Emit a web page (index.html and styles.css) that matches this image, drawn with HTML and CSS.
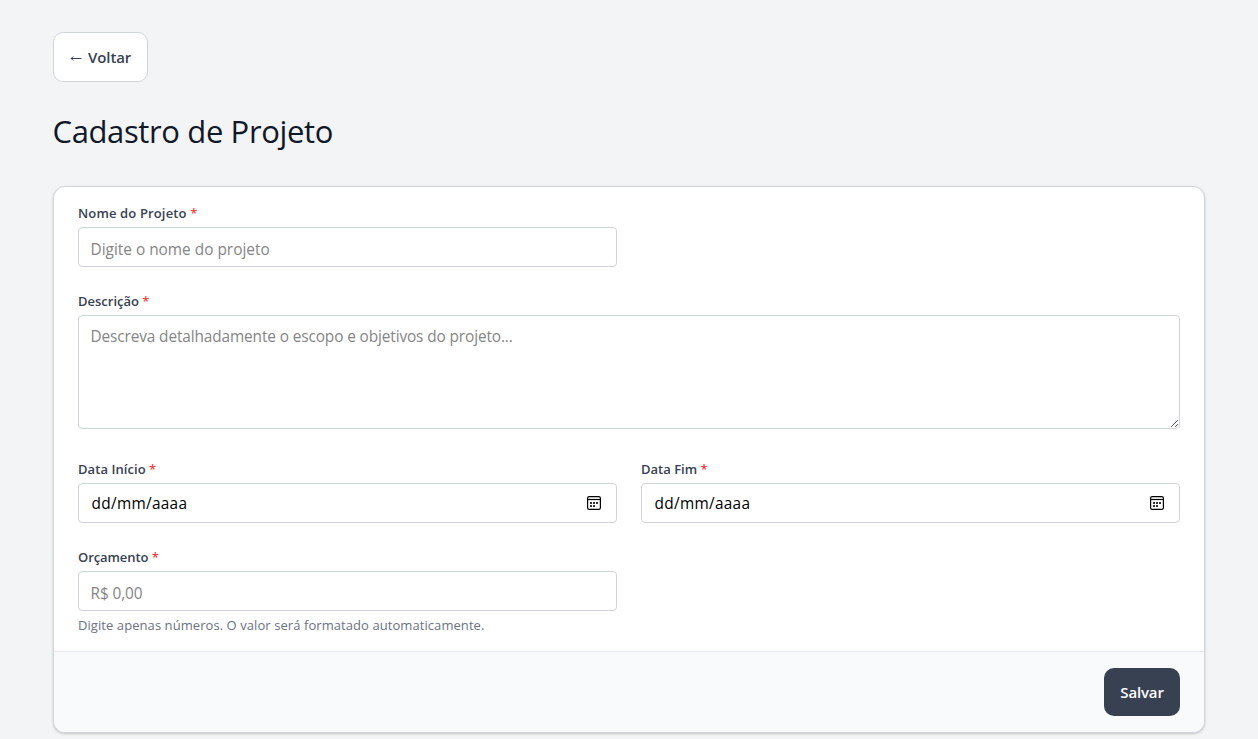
FILE: index.html
```html
<!DOCTYPE html>
<html lang="pt-BR">
<head>
<meta charset="utf-8">
<title>Cadastro de Projeto</title>
<link rel="stylesheet" href="styles.css">
</head>
<body>
<main class="page">
  <button class="btn-back" type="button"><svg class="arrow" viewBox="0 0 12 8"><path d="M11.5 4.5H1M3.2 2.5l-2 2 2 2"/></svg><span>Voltar</span></button>
  <h1 class="title">Cadastro de Projeto</h1>
  <form class="card">
    <div class="fields">
      <div class="field">
        <label class="label label-name" for="nome">Nome do Projeto <span class="req">*</span></label>
        <input class="control" id="nome" type="text" placeholder="Digite o nome do projeto">
      </div>
      <div class="field wide">
        <label class="label" for="desc">Descrição <span class="req">*</span></label>
        <div class="area-wrap">
          <textarea class="control area" id="desc" placeholder="Descreva detalhadamente o escopo e objetivos do projeto..."></textarea>
          <svg class="grip" viewBox="0 0 9 9"><path d="M1.5 7.5l6-6M5.5 7.5l2-2"/></svg>
        </div>
      </div>
      <div class="field">
        <span class="label label-date">Data Início <span class="req">*</span></span>
        <div class="control date"><span class="date-text">dd/mm/aaaa</span>
          <svg class="calendar" viewBox="0 0 14 14"><rect x=".6" y=".6" width="12.8" height="12.8" rx="1.6"/><path d="M1 3.5h12"/><path class="dots" d="M3 6h2v2H3zM6 6h2v2H6zM9 6h2v2H9zM3 9h2v2H3zM6 9h2v2H6z"/></svg>
        </div>
      </div>
      <div class="field">
        <span class="label">Data Fim <span class="req">*</span></span>
        <div class="control date"><span class="date-text">dd/mm/aaaa</span>
          <svg class="calendar" viewBox="0 0 14 14"><rect x=".6" y=".6" width="12.8" height="12.8" rx="1.6"/><path d="M1 3.5h12"/><path class="dots" d="M3 6h2v2H3zM6 6h2v2H6zM9 6h2v2H9zM3 9h2v2H3zM6 9h2v2H6z"/></svg>
        </div>
      </div>
      <div class="field">
        <label class="label label-money" for="valor">Orçamento <span class="req">*</span></label>
        <input class="control money" id="valor" type="text" placeholder="R$ 0,00">
        <p class="help">Digite apenas números. O valor será formatado automaticamente.</p>
      </div>
    </div>
    <footer class="actions"><button class="btn-save" type="button">Salvar</button></footer>
  </form>
</main>
</body>
</html>
```
FILE: styles.css
```css
* { box-sizing: border-box; }
body { margin: 0; min-height: 100vh; background: #f3f4f6; color: #111827; font-family: "Open Sans", "Noto Sans", sans-serif; }
button, input, textarea { font-family: inherit; margin: 0; }
.page { width: 1152px; margin: 0 auto; padding-top: 32px; }
.btn-back { display: flex; align-items: center; gap: 6px; width: 95px; height: 50px; padding: 0 15px; background: #fff; border: 1px solid #d1d5db; border-radius: 10px; color: #374151; font-size: 15px; font-weight: 600; line-height: 24px; letter-spacing: -.1px; }
.arrow { width: 12px; height: 8px; flex: none; margin: 1px 0 0 1px; fill: none; stroke: #374151; stroke-width: 1; }
.title { margin: 0 0 33px -.5px; padding-top: 31px; height: 71px; font-size: 31px; line-height: 36px; font-weight: 400; letter-spacing: -.37px; }
.card { margin: 0; background: #fff; border: 1px solid #d1d5db; border-radius: 12px; box-shadow: 0 1px 3px rgba(0,0,0,.1), 0 1px 2px rgba(0,0,0,.1); overflow: hidden; }
.fields { display: grid; grid-template-columns: 1fr 1fr; gap: 24px; padding: 16px 24px; }
.field { display: flex; flex-direction: column; min-width: 0; }
.wide { grid-column: 1 / -1; padding-bottom: 6px; }
.label { margin-bottom: 4px; color: #374151; font-size: 13px; line-height: 20px; font-weight: 600; }
.label-name { letter-spacing: .14px; }
.label-date { letter-spacing: .06px; }
.label-money { letter-spacing: -.08px; }
.req { color: #ef4444; }
.control { display: block; width: 100%; height: 40px; padding: 4px 11.5px 0; border: 1px solid #d1d5db; border-radius: 4px; background: #fff; color: #000; font-size: 15.4px; line-height: 24px; }
.control::placeholder { color: #858585; opacity: 1; }
.area-wrap { position: relative; }
.area { height: 114px; padding-top: 9px; resize: none; letter-spacing: -.12px; }
.money { letter-spacing: -.1px; }
.grip { position: absolute; right: 1px; bottom: 1px; width: 9px; height: 9px; fill: none; stroke: #444; stroke-width: .9; stroke-linecap: square; }
.date { display: flex; align-items: center; justify-content: space-between; padding: 0 15px 0 12.5px; letter-spacing: .3px; }
.date-text { padding-top: 2px; }
.calendar { width: 14px; height: 14px; fill: none; stroke: #000; stroke-width: 1.2; }
.dots { fill: #333; stroke: none; }
.help { margin: 4px 0 0; color: #6b7280; font-size: 13px; line-height: 20px; letter-spacing: .07px; }
.actions { display: flex; justify-content: flex-end; padding: 16px 24px; background: #f9fafb; border-top: 1px solid #e5e7eb; }
.btn-save { width: 76px; height: 48px; padding: 0; border: 0; border-radius: 10px; background: #374151; color: #fff; font-size: 15px; font-weight: 600; letter-spacing: -.15px; }
```
